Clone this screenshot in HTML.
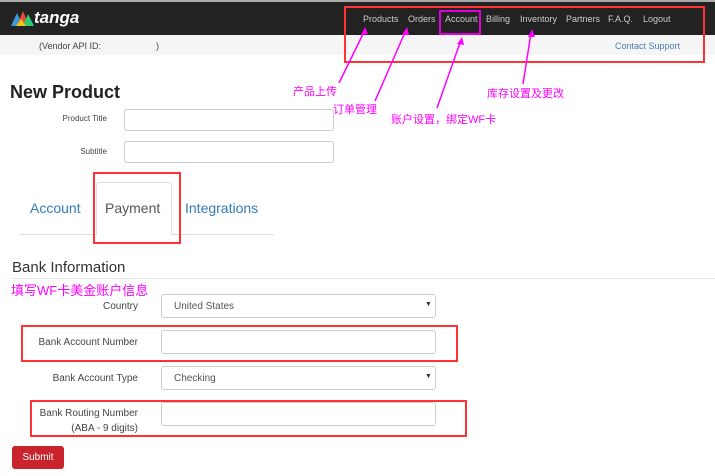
<!DOCTYPE html>
<html><head><meta charset="utf-8"><style>
*{margin:0;padding:0;box-sizing:border-box}
body{width:715px;height:476px;background:#fff;font-family:"Liberation Sans","Noto Sans CJK SC",sans-serif;position:relative;overflow:hidden;color:#333}
.a{position:absolute;white-space:nowrap}
.nav{top:14px;font-size:9px;color:#ccc}
.cn{color:#f0f;font-size:11px;font-family:"Liberation Sans","Noto Sans CJK SC",sans-serif}
.inp{position:absolute;border:1px solid #ccc;border-radius:3px;background:#fff}
.lbl{font-size:10px;color:#444;text-align:right}
.red{position:absolute;border:2px solid #f33}
</style></head><body>
<div class="a" style="left:0;top:0;width:715px;height:2px;background:#aaa"></div>
<div class="a" style="left:0;top:2px;width:715px;height:33px;background:#222"></div>
<div class="a" style="left:0;top:35px;width:715px;height:20px;background:#f5f5f5"></div>
<svg class="a" style="left:11px;top:9px" width="24" height="18" viewBox="0 0 24 18"><polygon points="0,17 6,4 12,17" fill="#3a9ad9"/><polygon points="6,17 12,2 18,17" fill="#e84c3d"/><polygon points="12,17 17,5 23,17" fill="#2ecc71"/><polygon points="5,17 10,10 15,17" fill="#f1c40f"/></svg>
<div class="a" style="left:34px;top:8px;font-size:17px;font-weight:bold;font-style:italic;color:#fff">tanga</div>
<div class="a" style="left:39px;top:41px;font-size:9px;color:#444">(Vendor API ID:&nbsp;&nbsp;&nbsp;&nbsp;&nbsp;&nbsp;&nbsp;&nbsp;&nbsp;&nbsp;&nbsp;&nbsp;&nbsp;&nbsp;&nbsp;&nbsp;&nbsp;&nbsp;&nbsp;&nbsp;&nbsp;&nbsp;)</div>
<div class="a nav" style="left:363px">Products</div>
<div class="a nav" style="left:408px">Orders</div>
<div class="a nav" style="left:445px">Account</div>
<div class="a nav" style="left:486px">Billing</div>
<div class="a nav" style="left:520px">Inventory</div>
<div class="a nav" style="left:566px">Partners</div>
<div class="a nav" style="left:608px">F.A.Q.</div>
<div class="a nav" style="left:643px">Logout</div>
<div class="a" style="left:615px;top:41px;font-size:9px;color:#4a7fb5">Contact Support</div>
<div class="red" style="left:344px;top:6px;width:361px;height:57px"></div>
<div class="a" style="left:439px;top:10px;width:42px;height:25px;border:2px solid #d0d"></div>
<svg class="a" style="left:0;top:0" width="715" height="140"><g stroke="#f0f" stroke-width="1.5" fill="#f0f"><line x1="339" y1="83" x2="365" y2="30"/><line x1="375" y1="101" x2="406" y2="30"/><line x1="437" y1="108" x2="461" y2="40"/><line x1="523" y1="84" x2="531" y2="33"/></g>
<g fill="#f0f"><polygon points="365,27 361,35 368,34"/><polygon points="407,27 402,35 409,35"/><polygon points="462,37 457,44 464,45"/><polygon points="532,29 528,37 535,37"/></g></svg>
<div class="a cn" style="left:293px;top:83px">产品上传</div>
<div class="a cn" style="left:333px;top:101px">订单管理</div>
<div class="a cn" style="left:391px;top:111px">账户设置，绑定WF卡</div>
<div class="a cn" style="left:487px;top:85px">库存设置及更改</div>
<div class="a" style="left:10px;top:82px;font-size:18px;font-weight:bold;color:#222">New Product</div>
<div class="a lbl" style="left:40px;top:114px;width:67px;font-size:8px">Product Title</div>
<div class="inp" style="left:124px;top:109px;width:210px;height:22px"></div>
<div class="a lbl" style="left:40px;top:147px;width:67px;font-size:8px">Subtitle</div>
<div class="inp" style="left:124px;top:141px;width:210px;height:22px"></div>
<div class="a" style="left:19px;top:234px;width:255px;height:1px;background:#ddd"></div>
<div class="a" style="left:96px;top:182px;width:76px;height:53px;border:1px solid #ddd;border-bottom:none;background:#fff;border-radius:3px 3px 0 0"></div>
<div class="a" style="left:30px;top:200px;font-size:14px;color:#337ab7">Account</div>
<div class="a" style="left:105px;top:200px;font-size:14px;color:#555">Payment</div>
<div class="a" style="left:185px;top:200px;font-size:14px;color:#337ab7">Integrations</div>
<div class="red" style="left:93px;top:172px;width:88px;height:72px"></div>
<div class="a" style="left:12px;top:259px;font-size:15px;color:#333">Bank Information</div>
<div class="a" style="left:12px;top:278px;width:703px;height:1px;background:#e5e5e5"></div>
<div class="a cn" style="left:11px;top:280px;font-size:13px">填写WF卡美金账户信息</div>
<div class="a lbl" style="left:20px;top:301px;width:118px">Country</div>
<div class="inp" style="left:161px;top:294px;width:275px;height:24px"></div>
<div class="a" style="left:174px;top:301px;font-size:10px;color:#555">United States</div>
<div class="a" style="left:425px;top:301px;font-size:7px">▼</div>
<div class="a lbl" style="left:20px;top:337px;width:118px">Bank Account Number</div>
<div class="inp" style="left:161px;top:330px;width:275px;height:24px"></div>
<div class="red" style="left:21px;top:325px;width:437px;height:37px"></div>
<div class="a lbl" style="left:20px;top:373px;width:118px">Bank Account Type</div>
<div class="inp" style="left:161px;top:366px;width:275px;height:24px"></div>
<div class="a" style="left:174px;top:373px;font-size:10px;color:#555">Checking</div>
<div class="a" style="left:425px;top:373px;font-size:7px">▼</div>
<div class="a lbl" style="left:20px;top:408px;width:118px">Bank Routing Number</div>
<div class="a lbl" style="left:20px;top:423px;width:118px">(ABA - 9 digits)</div>
<div class="inp" style="left:161px;top:402px;width:275px;height:24px"></div>
<div class="red" style="left:30px;top:400px;width:437px;height:37px"></div>
<div class="a" style="left:12px;top:446px;width:52px;height:23px;background:#c9242b;border-radius:3px;color:#fff;font-size:10px;text-align:center;line-height:23px">Submit</div>
</body></html>
